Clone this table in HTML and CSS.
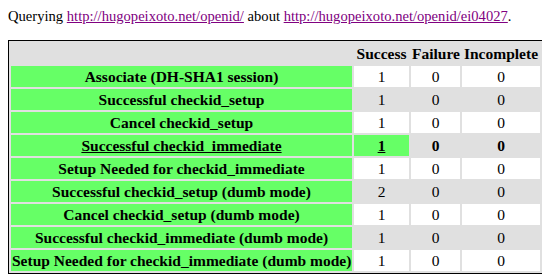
FILE: index.html
```html
<!DOCTYPE html>
<html>
<head>
<meta charset="utf-8">
<link rel="stylesheet" href="styles.css">
</head>
<body>
<p class="intro">Querying <a href="#">http://hugopeixoto.net/openid/</a> about <a href="#">http://hugopeixoto.net/openid/ei04027</a>.</p>
<table class="results">
<colgroup><col class="c-name"><col class="c-success"><col class="c-failure"><col class="c-incomplete"></colgroup>
<tr><th class="blank"></th><th>Success</th><th>Failure</th><th>Incomplete</th></tr>
<tr class="odd"><th class="name">Associate (DH-SHA1 session)</th><td>1</td><td>0</td><td>0</td></tr>
<tr class="even"><th class="name">Successful checkid_setup</th><td>1</td><td>0</td><td>0</td></tr>
<tr class="odd"><th class="name">Cancel checkid_setup</th><td>1</td><td>0</td><td>0</td></tr>
<tr class="even current"><th class="name"><u>Successful checkid_immediate</u></th><td class="hit"><u>1</u></td><td>0</td><td>0</td></tr>
<tr class="odd"><th class="name">Setup Needed for checkid_immediate</th><td>1</td><td>0</td><td>0</td></tr>
<tr class="even"><th class="name">Successful checkid_setup (dumb mode)</th><td>2</td><td>0</td><td>0</td></tr>
<tr class="odd"><th class="name">Cancel checkid_setup (dumb mode)</th><td>1</td><td>0</td><td>0</td></tr>
<tr class="even"><th class="name">Successful checkid_immediate (dumb mode)</th><td>1</td><td>0</td><td>0</td></tr>
<tr class="odd"><th class="name">Setup Needed for checkid_immediate (dumb mode)</th><td>1</td><td>0</td><td>0</td></tr>
</table>
</body>
</html>
```
FILE: styles.css
```css
body {
  margin: 8px;
  font-family: "Liberation Serif", "Times New Roman", serif;
  font-size: 16px;
  color: #000;
  background: #fff;
}
.intro {
  margin: 0 0 16px 0;
  font-size: 14.6px;
  line-height: 16px;
  white-space: nowrap;
}
.intro a {
  color: #800080;
}
.results {
  border: 1px solid #000;
  border-spacing: 2px;
  background: #e0e0e0;
  table-layout: fixed;
  width: 535px;
  font-size: 15.5px;
}
.c-name { width: 341px; }
.c-success { width: 55px; }
.c-failure { width: 49px; }
.c-incomplete { width: 78px; }
.results th,
.results td {
  padding: 1px;
  height: 19px;
  line-height: 19px;
  text-align: center;
  white-space: nowrap;
}
.results th {
  font-weight: bold;
}
.results th.name {
  background: #66ff66;
}
.results tr.odd td {
  background: #fff;
}
.results tr.current td {
  font-weight: bold;
}
.results td.hit {
  background: #66ff66;
}
```
